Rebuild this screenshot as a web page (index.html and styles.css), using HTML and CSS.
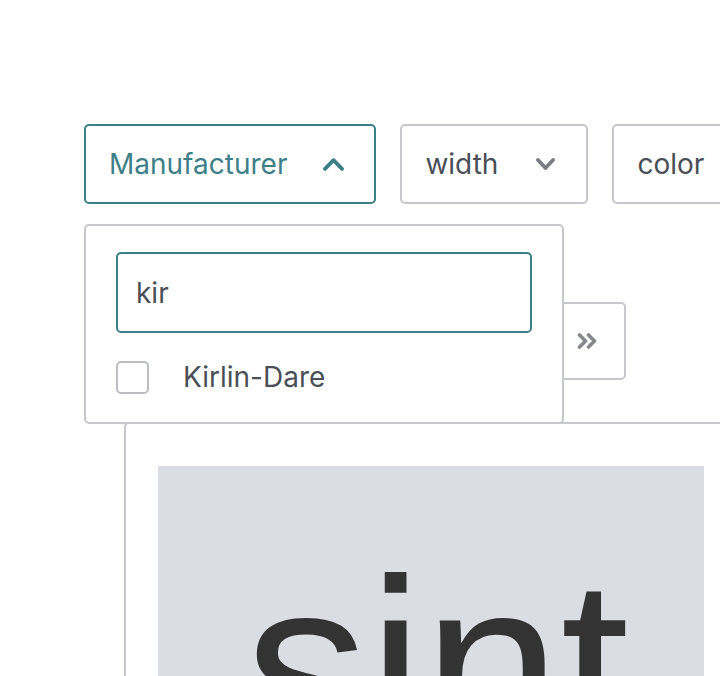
FILE: index.html
```html
<!DOCTYPE html>
<html lang="en">
<head>
<meta charset="utf-8">
<title>Catalog</title>
<link rel="stylesheet" href="styles.css">
</head>
<body>
<div class="page">
  <div class="filters">
    <div class="filter">
      <button class="filter-btn is-open">
        <span>Manufacturer</span>
        <svg class="chev chev-up" viewBox="0 0 21 13" width="21" height="13"><polyline points="2,10.8 10.5,2.2 19,10.8"/></svg>
      </button>
      <div class="dropdown">
        <div class="search">kir</div>
        <label class="option">
          <span class="checkbox"></span>
          <span>Kirlin-Dare</span>
        </label>
      </div>
    </div>
    <div class="filter">
      <button class="filter-btn is-closed">
        <span>width</span>
        <svg class="chev" viewBox="0 0 19 12" width="19" height="12"><polyline points="2,2 9.5,10 17,2"/></svg>
      </button>
    </div>
    <div class="filter">
      <button class="filter-btn is-closed">
        <span>color</span>
        <svg class="chev" viewBox="0 0 19 12" width="19" height="12"><polyline points="2,2 9.5,10 17,2"/></svg>
      </button>
    </div>
  </div>

  <div class="pager">
    <button class="page-btn">
      <svg viewBox="0 0 20 16" width="20" height="16"><polyline points="2.5,2 8.5,8 2.5,14"/><polyline points="11.5,2 17.5,8 11.5,14"/></svg>
    </button>
  </div>

  <div class="cards">
    <div class="card">
      <div class="thumb"><span>sint</span></div>
    </div>
  </div>
</div>
</body>
</html>
```

FILE: styles.css
```css
html, body {
  margin: 0;
  padding: 0;
  overflow: hidden;
  background: #fff;
}
body {
  font-family: Inter, "Noto Sans", sans-serif;
  color: #4a4f57;
}
.page {
  padding: 124px 0 0 84px;
  width: 1000px;
}
.filters {
  display: flex;
  gap: 24px;
}
.filter {
  position: relative;
}
.filter-btn {
  display: flex;
  align-items: center;
  height: 80px;
  box-sizing: border-box;
  border: 2px solid #c6c8cd;
  border-radius: 5px;
  background: #fff;
  font-family: inherit;
  font-size: 28px;
  color: #4a4f57;
  padding: 0 30px 0 23px;
  gap: 36px;
  cursor: pointer;
}
.filter-btn.is-closed {
  gap: 38px;
  padding-right: 31px;
}
.filter-btn.is-open {
  border-color: #3d7f88;
  color: #3d7f88;
}
.chev {
  fill: none;
  stroke: #7a7d82;
  stroke-width: 3.8;
  stroke-linecap: round;
  stroke-linejoin: round;
}
.chev-up {
  stroke: #3d7f88;
}
.dropdown {
  position: absolute;
  top: 100px;
  left: 0;
  z-index: 5;
  width: 480px;
  box-sizing: border-box;
  background: #fff;
  border: 2px solid #c6c8cd;
  border-radius: 5px;
  padding: 26px 30px 28px;
}
.search {
  height: 81px;
  box-sizing: border-box;
  border: 2px solid #3d7f88;
  border-radius: 5px;
  display: flex;
  align-items: center;
  padding-left: 18px;
  font-size: 28px;
  color: #4a4f57;
}
.option {
  display: flex;
  align-items: center;
  gap: 34px;
  margin-top: 27px;
  font-size: 28px;
  color: #4a4f57;
}
.checkbox {
  width: 33px;
  height: 33px;
  box-sizing: border-box;
  border: 2px solid #bcbec4;
  border-radius: 5px;
}
.pager {
  display: flex;
  margin-top: 98px;
  padding-left: 464px;
}
.page-btn {
  width: 78px;
  height: 78px;
  box-sizing: border-box;
  border: 2px solid #c6c8cd;
  border-radius: 5px;
  background: #fff;
  display: flex;
  align-items: center;
  justify-content: center;
  padding: 0;
}
.page-btn svg {
  fill: none;
  stroke: #85888d;
  stroke-width: 3.6;
  stroke-linecap: round;
  stroke-linejoin: round;
}
.cards {
  margin-top: 42px;
  padding-left: 40px;
}
.card {
  width: 614px;
  box-sizing: border-box;
  border: 2px solid #c6c8cd;
  border-radius: 5px;
  padding: 42px 32px 32px;
}
.thumb {
  height: 546px;
  background: #dbdde5;
  display: flex;
  justify-content: center;
  align-items: flex-start;
  padding: 76px 0 0 12px;
  box-sizing: border-box;
}
.thumb span {
  font-size: 247px;
  line-height: 1;
  color: #333;
  font-family: "Liberation Sans", Arial, sans-serif;
}
```
